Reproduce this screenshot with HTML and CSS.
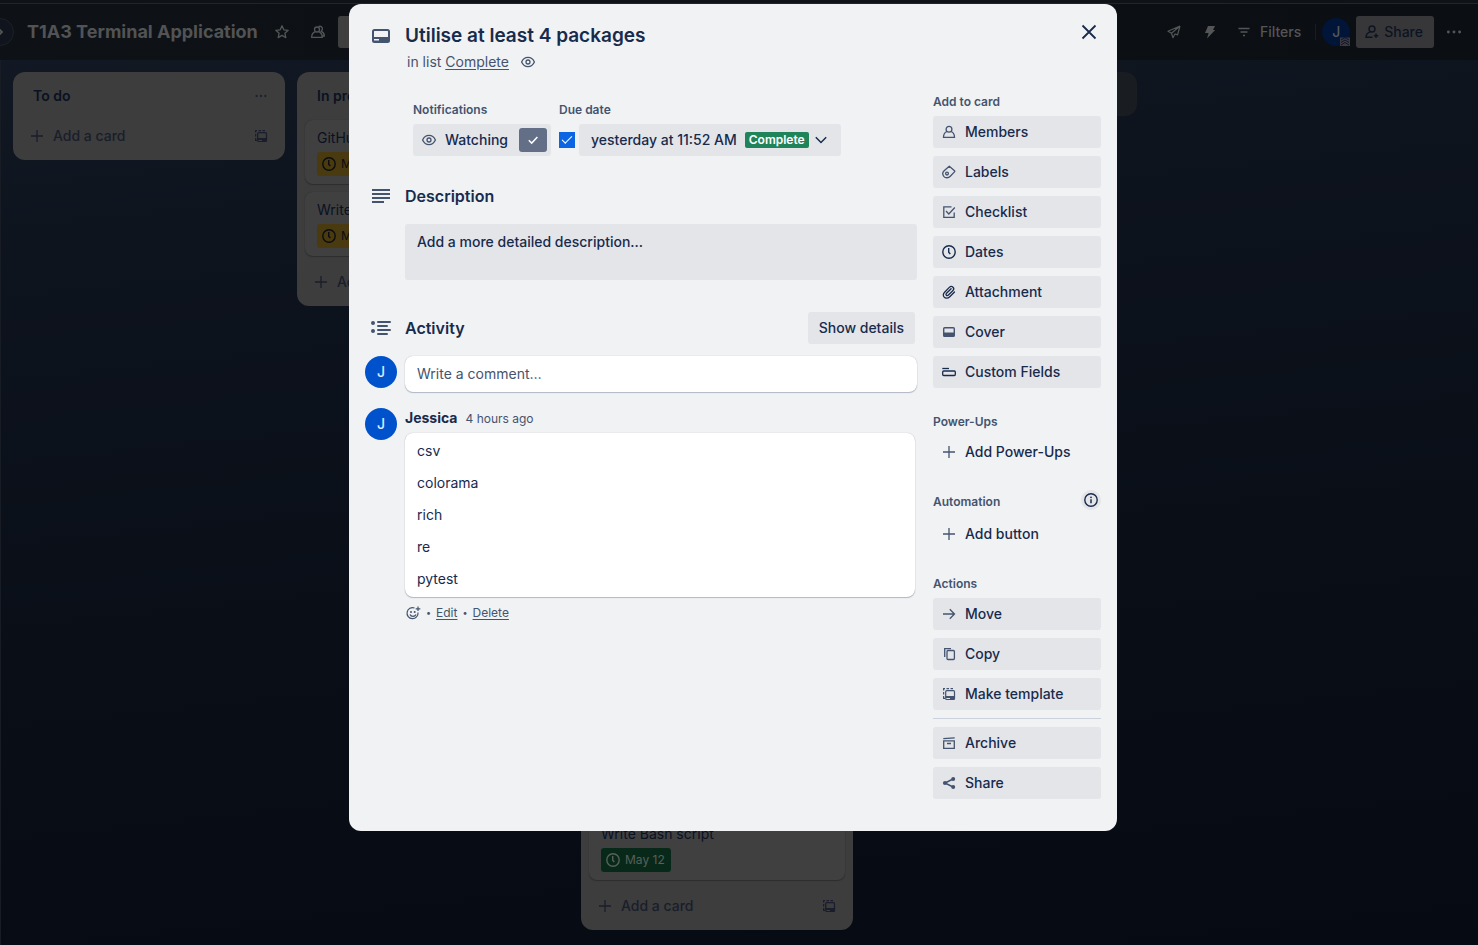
FILE: index.html
```html
<!DOCTYPE html>
<html lang="en">
<head>
<meta charset="utf-8">
<title>Utilise at least 4 packages</title>
<meta name="viewport" content="width=device-width, initial-scale=1">
<link rel="stylesheet" href="styles.css">
</head>
<body>
<svg class="sprite" aria-hidden="true">
  <symbol id="i-plus" viewBox="0 0 16 16"><path d="M8 2v12M2 8h12" fill="none" stroke="currentColor" stroke-width="1.3"/></symbol>
  <symbol id="i-template" viewBox="0 0 16 16"><g fill="none" stroke="currentColor" stroke-width="1.2"><path d="M2.600 4.500V2.600H4M5.500 2.600h2.500M9.500 2.600H12M2.600 6v2.500M2.600 10v2.400H4"/><rect x="4.700" y="4.700" width="8.800" height="8.800" rx="1"/></g><path d="M4.700 10h8.800v3.500H9V12H4.700z" fill="currentColor"/></symbol>
  <symbol id="i-dots" viewBox="0 0 16 16"><g fill="currentColor"><circle cx="3" cy="8" r="1.3"/><circle cx="8" cy="8" r="1.3"/><circle cx="13" cy="8" r="1.3"/></g></symbol>
  <symbol id="i-clock" viewBox="0 0 16 16"><g fill="none" stroke="currentColor" stroke-width="1.4"><circle cx="8" cy="8" r="6.2"/><path d="M7.7 4v4.2l1.6 1.8"/></g></symbol>
  <symbol id="i-eye" viewBox="0 0 16 16"><g fill="none" stroke="currentColor" stroke-width="1.3"><path d="M1.6 8C3 4.9 5.3 3.4 8 3.4S13 4.9 14.4 8C13 11.1 10.700 12.600 8 12.600S3 11.100 1.600 8z"/><circle cx="8" cy="8" r="2"/></g></symbol>
  <symbol id="i-check" viewBox="0 0 16 16"><path d="M3.800 8.200l2.900 2.900 5.700-6" fill="none" stroke="currentColor" stroke-width="1.500"/></symbol>
  <symbol id="i-card" viewBox="0 0 20 20"><rect x="2" y="4" width="16" height="12" rx="1.500" fill="none" stroke="currentColor" stroke-width="2"/><path d="M2 11h16v5H2z" fill="currentColor"/><path d="M3 13h5v1.500H3z" fill="#f1f2f4"/></symbol>
</svg>

<div class="board">
  <header class="board-bar">
    <button class="expand" aria-label="Expand sidebar"><svg viewBox="0 0 16 16" width="16" height="16"><path d="M6 4l4 4-4 4" fill="none" stroke="currentColor" stroke-width="1.800"/></svg></button>
    <h1 class="board-name">T1A3 Terminal Application</h1>
    <button class="bar-icon star" aria-label="Star board"><svg viewBox="0 0 16 16" width="16" height="16"><path d="M8 1.800l1.800 4 4.400.5-3.300 2.900.9 4.400L8 11.400l-3.800 2.200.9-4.400L1.800 6.300l4.400-.5z" fill="none" stroke="currentColor" stroke-width="1.300" stroke-linejoin="round"/></svg></button>
    <button class="bar-icon" aria-label="Visibility"><svg viewBox="0 0 16 16" width="16" height="16"><g fill="none" stroke="currentColor" stroke-width="1.300"><circle cx="7" cy="5.500" r="2.500"/><path d="M5.500 7.600C3 8.500 1.600 10.500 1.700 13.300h10.600c0-2.800-1.300-4.800-3.800-5.700M8.500 2.600c2-1 4 .2 3.900 2.200 0 1-.4 1.800-1.200 2.400 2 .9 3.100 2.500 3.100 4.800h-1.500"/></g></svg></button>
    <button class="view-button" aria-label="Board view"></button>
    <div class="bar-right">
      <button class="bar-icon" aria-label="Power-Ups"><svg viewBox="0 0 16 16" width="16" height="16"><path d="M14 2L2 7.300l3.500 2M14 2l-2.500 9L9 9.800M14 2L5.500 9.300 7 13.700 9 9.800" fill="none" stroke="currentColor" stroke-width="1.200" stroke-linejoin="round"/></svg></button>
      <button class="bar-icon" aria-label="Automation"><svg viewBox="0 0 16 16" width="16" height="16"><path d="M6 2h7l-2 4h2.200L5 14.500 6.600 9H3z" fill="currentColor"/></svg></button>
      <button class="filters"><svg viewBox="0 0 16 16" width="16" height="16"><path d="M2.500 4.500h11M4.500 8h7M7 11.500h2" fill="none" stroke="currentColor" stroke-width="1.400"/></svg>Filters</button>
      <span class="bar-divider"></span>
      <span class="member">J<svg viewBox="0 0 10 10" width="10" height="10"><path d="M0 1.500h10V10H0z" fill="#3a3a42"/><path d="M1 4l4-2.500L9 4M1 6.500L5 4l4 2.500M1 9l4-2.500L9 9" fill="none" stroke="#12122a" stroke-width="1"/></svg></span>
      <button class="share-board"><svg viewBox="0 0 16 16" width="16" height="16"><g fill="none" stroke="currentColor" stroke-width="1.400"><circle cx="8" cy="5" r="3"/><path d="M6.300 7.800C3.500 8.700 2 10.500 2 13.300h6.500M12 9.500v4.500M9.800 11.800h4.500"/></g></svg>Share</button>
      <button class="bar-icon more" aria-label="More"><svg width="18" height="18"><use href="#i-dots"/></svg></button>
    </div>
  </header>

  <main class="lists">
    <section class="list">
      <div class="list-head"><h2>To do</h2><button aria-label="List actions"><svg width="14" height="14"><use href="#i-dots"/></svg></button></div>
      <div class="list-foot"><button class="add-card"><svg width="16" height="16"><use href="#i-plus"/></svg>Add a card</button><button aria-label="Create from template"><svg width="16" height="16"><use href="#i-template"/></svg></button></div>
    </section>
    <section class="list">
      <div class="list-head"><h2>In progress</h2><button aria-label="List actions"><svg width="14" height="14"><use href="#i-dots"/></svg></button></div>
      <div class="cards">
        <article class="card"><p>GitHub</p><span class="due soon"><svg width="16" height="16"><use href="#i-clock"/></svg>May 14</span></article>
        <article class="card"><p>Write</p><span class="due soon"><svg width="16" height="16"><use href="#i-clock"/></svg>May 14</span></article>
      </div>
      <div class="list-foot"><button class="add-card"><svg width="16" height="16"><use href="#i-plus"/></svg>Add a card</button></div>
    </section>
    <section class="list list-full" aria-label="Complete">
      <div class="cards">
        <article class="card"><p>Write Bash script</p><span class="due done"><svg width="16" height="16"><use href="#i-clock"/></svg>May 12</span></article>
      </div>
      <div class="list-foot"><button class="add-card"><svg width="16" height="16"><use href="#i-plus"/></svg>Add a card</button><button aria-label="Create from template"><svg width="16" height="16"><use href="#i-template"/></svg></button></div>
    </section>
    <button class="add-list" aria-label="Add another list"></button>
  </main>
</div>

<div class="overlay">
  <div class="dialog" role="dialog" aria-labelledby="card-title">
    <button class="close" aria-label="Close"><svg viewBox="0 0 20 20" width="20" height="20"><path d="M3.500 3.500l13 13M16.500 3.500l-13 13" fill="none" stroke="currentColor" stroke-width="1.800"/></svg></button>
    <header class="dialog-head">
      <svg class="head-icon" width="20" height="20"><use href="#i-card"/></svg>
      <div>
        <h2 id="card-title">Utilise at least 4 packages</h2>
        <p class="in-list">in list <a href="#">Complete</a><svg width="16" height="16"><use href="#i-eye"/></svg></p>
      </div>
    </header>
    <div class="dialog-body">
      <div class="main">
        <div class="details">
          <div>
            <h3 class="label">Notifications</h3>
            <button class="gray-button watching"><svg width="16" height="16"><use href="#i-eye"/></svg>Watching<span class="watch-check"><svg width="16" height="16"><use href="#i-check"/></svg></span></button>
          </div>
          <div>
            <h3 class="label">Due date</h3>
            <div class="due-row">
              <input type="checkbox" class="due-box" aria-label="Due date complete" checked>
              <button class="gray-button due-button">yesterday at 11:52 AM<span class="badge">Complete</span><svg viewBox="0 0 16 16" width="16" height="16"><path d="M2.800 5.300L8 10.500l5.200-5.200" fill="none" stroke="currentColor" stroke-width="1.500"/></svg></button>
            </div>
          </div>
        </div>

        <div class="section-head">
          <svg class="head-icon" viewBox="0 0 22 22" width="22" height="22"><path d="M2 5h18M2 9h18M2 13h18M2 17h12" fill="none" stroke="currentColor" stroke-width="2"/></svg>
          <h3>Description</h3>
        </div>
        <button class="description">Add a more detailed description...</button>

        <div class="section-head activity">
          <svg class="head-icon" viewBox="0 0 22 22" width="22" height="22"><g fill="none" stroke="currentColor" stroke-width="2" stroke-linecap="round"><path d="M8 5h12M8 9h9M8 13h12M8 17h9"/></g><g fill="currentColor"><circle cx="3" cy="6" r="2"/><circle cx="3" cy="14" r="2"/></g></svg>
          <h3>Activity</h3>
          <button class="gray-button details-button">Show details</button>
        </div>
        <div class="row">
          <span class="avatar">J</span>
          <input class="comment-input" type="text" placeholder="Write a comment…" aria-label="Write a comment">
        </div>
        <div class="row comment">
          <span class="avatar">J</span>
          <div class="comment-main">
            <p class="byline"><strong>Jessica</strong><a href="#">4 hours ago</a></p>
            <div class="comment-text"><p>csv</p><p>colorama</p><p>rich</p><p>re</p><p>pytest</p></div>
            <div class="comment-links"><button aria-label="Add reaction"><svg viewBox="0 0 16 16" width="16" height="16"><g fill="none" stroke="currentColor" stroke-width="1.200"><path d="M9.500 3A5.500 5.500 0 1 0 13 7.500"/><path d="M5 9.600c1 2.400 5 2.400 6 0M13 1.500v4.600M10.700 3.800h4.600"/></g><circle cx="6" cy="7" r="1" fill="currentColor"/><circle cx="9.700" cy="7" r="1" fill="currentColor"/></svg></button><span class="dot">•</span><a href="#">Edit</a><span class="dot">•</span><a href="#">Delete</a></div>
          </div>
        </div>
      </div>

      <aside class="side">
        <section>
          <h3 class="label">Add to card</h3>
          <div class="stack">
            <button class="gray-button"><svg viewBox="0 0 16 16" width="16" height="16"><g fill="none" stroke="currentColor" stroke-width="1.300"><circle cx="8" cy="5.300" r="2.900"/><path d="M5.800 7.500C3.500 8.500 2.500 10.500 2.500 13.300h11c0-2.800-1-4.800-3.300-5.800"/></g></svg>Members</button>
            <button class="gray-button"><svg viewBox="0 0 16 16" width="16" height="16"><g fill="none" stroke="currentColor" stroke-width="1.300"><path d="M8.300 2.200l5.200 4.500c.4.400.4.800 0 1.200l-4.200 4.300c-2 2.200-5 1.900-6.500.1-1.500-1.900-1.200-4.300.6-5.900z" stroke-linejoin="round"/><circle cx="6" cy="9.600" r="1.400"/></g></svg>Labels</button>
            <button class="gray-button"><svg viewBox="0 0 16 16" width="16" height="16"><path d="M10.500 2.900H2.800v10.400h10.400V8.500M5 7l2.800 3 6-6.500" fill="none" stroke="currentColor" stroke-width="1.300"/></svg>Checklist</button>
            <button class="gray-button strong"><svg width="16" height="16"><use href="#i-clock"/></svg>Dates</button>
            <button class="gray-button strong"><svg viewBox="0 0 16 16" width="16" height="16"><path d="M13.500 8l-4.700 4.700c-2.300 2.300-4.600 1.500-5.600.4C2 11.900 1.900 10 3.600 8.300l4.700-4.900c1.300-1.300 2.900-1 3.700-.2.900.9 1 2.300-.2 3.500L7.400 11c-.8.800-1.700.6-2.100.2-.5-.5-.5-1.200.2-1.900l4.600-4.600" fill="none" stroke="currentColor" stroke-width="1.300" stroke-linecap="round"/></svg>Attachment</button>
            <button class="gray-button"><svg viewBox="0 0 16 16" width="16" height="16"><rect x="2.700" y="3.700" width="10.600" height="8.600" rx="1" fill="none" stroke="currentColor" stroke-width="1.400"/><path d="M2.500 8.500h11v4h-11z" fill="currentColor"/></svg>Cover</button>
            <button class="gray-button strong"><svg viewBox="0 0 16 16" width="16" height="16"><g fill="none" stroke="currentColor" stroke-width="1.300"><path d="M1.300 4.500H8"/><rect x="1.700" y="7" width="12.600" height="4.500" rx="1"/></g></svg>Custom Fields</button>
          </div>
        </section>
        <section>
          <h3 class="label">Power-Ups</h3>
          <div class="stack"><button class="gray-button plain"><svg width="16" height="16"><use href="#i-plus"/></svg>Add Power-Ups</button></div>
        </section>
        <section>
          <div class="label automation"><h3>Automation</h3><button aria-label="About automation"><svg viewBox="0 0 16 16" width="16" height="16"><circle cx="8" cy="8" r="6.200" fill="none" stroke="currentColor" stroke-width="1.400"/><path d="M8 7.200v4" stroke="currentColor" stroke-width="1.500"/><circle cx="8" cy="5.300" r=".9" fill="currentColor"/></svg></button></div>
          <div class="stack"><button class="gray-button plain"><svg width="16" height="16"><use href="#i-plus"/></svg>Add button</button></div>
        </section>
        <section>
          <h3 class="label">Actions</h3>
          <div class="stack">
            <button class="gray-button"><svg viewBox="0 0 16 16" width="16" height="16"><path d="M2 8h11.500M8.800 3.300L13.500 8l-4.700 4.700" fill="none" stroke="currentColor" stroke-width="1.300"/></svg>Move</button>
            <button class="gray-button"><svg viewBox="0 0 16 16" width="16" height="16"><g fill="none" stroke="currentColor" stroke-width="1.300"><rect x="6" y="4.500" width="7.400" height="9" rx="1"/><path d="M3.700 11V2.700H10"/></g></svg>Copy</button>
            <button class="gray-button"><svg width="16" height="16"><use href="#i-template"/></svg>Make template</button>
            <hr>
            <button class="gray-button"><svg viewBox="0 0 16 16" width="16" height="16"><g fill="none" stroke="currentColor" stroke-width="1.300"><path d="M2.300 3.700l11.400-.9M2.700 5.800h10.600v7.500H2.700zM6 8.500h4"/></g></svg>Archive</button>
            <button class="gray-button"><svg viewBox="0 0 16 16" width="16" height="16"><path d="M12 4L4 8l8 4" fill="none" stroke="currentColor" stroke-width="1.500"/><g fill="currentColor"><circle cx="12.200" cy="4" r="2"/><circle cx="4" cy="8" r="2.100"/><circle cx="12.200" cy="12" r="2"/></g></svg>Share</button>
          </div>
        </section>
      </aside>
    </div>
  </div>
</div>
</body>
</html>
```
FILE: styles.css
```css
*, *::before, *::after { box-sizing: border-box; }

body {
  margin: 0;
  font-family: Inter, "Liberation Sans", sans-serif;
  font-size: 14px;
  line-height: 20px;
  color: #172b4d;
  background: #060a13;
}

h1, h2, h3, p { margin: 0; }

button, input { font: inherit; color: inherit; }

button {
  margin: 0;
  padding: 0;
  border: 0;
  background: none;
}

svg { display: block; flex: none; }
.sprite { position: absolute; width: 0; height: 0; }

/* Board behind the dialog */
.board {
  display: flex;
  flex-direction: column;
  height: 100vh;
  overflow: hidden;
  border-top: 3px solid #0f1318;
  background: linear-gradient(174deg, #131a25 0%, #0e141e 22%, #090e17 60%, #060a13 100%);
}

.board-bar {
  display: flex;
  align-items: center;
  flex: none;
  height: 57px;
  border-top: 1px solid #22262b;
  background: linear-gradient(90deg, #0e1217, #0b0e13);
  color: #545556;
}

.expand {
  display: flex;
  align-items: center;
  justify-content: center;
  width: 28px;
  height: 28px;
  margin-left: -14px;
  border: 1px solid #1d2029;
  border-radius: 50%;
  background: #10141d;
}

.board-name {
  margin-left: 13px;
  font-size: 18px;
  line-height: 24px;
  font-weight: 700;
  color: #525354;
}

.bar-icon {
  display: flex;
  align-items: center;
  justify-content: center;
  width: 36px;
  height: 32px;
}

.star { margin-left: 6px; }

.view-button {
  width: 88px;
  height: 32px;
  margin-left: 2px;
  border-radius: 3px;
  background: #403f40;
}

.bar-right {
  display: flex;
  align-items: center;
  margin-left: auto;
  padding-right: 6px;
}

.filters {
  display: flex;
  align-items: center;
  gap: 8px;
  padding: 0 14px 0 8px;
  font-weight: 500;
}

.bar-divider { width: 1px; height: 16px; background: #191d22; }

.member {
  position: relative;
  display: flex;
  align-items: center;
  justify-content: center;
  width: 28px;
  height: 28px;
  margin: 0 6px;
  border-radius: 50%;
  background: #001537;
  color: #55585f;
  font-weight: 500;
}

.member svg { position: absolute; right: 0; bottom: 0; }

.share-board {
  display: flex;
  align-items: center;
  gap: 4px;
  height: 32px;
  padding: 0 11px 0 8px;
  border-radius: 3px;
  background: #373739;
  color: #0c1422;
  font-weight: 500;
}

.more { margin-left: 2px; }

.lists {
  display: flex;
  align-items: flex-start;
  flex: 1;
  gap: 12px;
  min-height: 0;
  padding: 12px 12px 15px;
  border-left: 1px solid #171c25;
}

.list {
  flex: none;
  width: 272px;
  padding-bottom: 8px;
  border-radius: 12px;
  background: #3c3d3c;
  color: #0a1122;
}

.list-full {
  display: flex;
  flex-direction: column;
  align-self: stretch;
}

.list-full .cards { flex: 1; justify-content: flex-end; }

.list-head {
  display: flex;
  align-items: center;
  justify-content: space-between;
  height: 48px;
  padding: 0 17px 0 20px;
}

.list-head h2 { font-size: 14px; font-weight: 600; line-height: 20px; }
.list-head button { color: #1d2230; }

.list-foot {
  display: flex;
  align-items: center;
  justify-content: space-between;
  height: 32px;
  padding: 0 16px;
  color: #1a1d2b;
}

.add-card { display: flex; align-items: center; gap: 8px; font-weight: 500; }

.cards {
  display: flex;
  flex-direction: column;
  gap: 8px;
  padding: 0 8px 10px;
}

.card {
  padding: 8px 12px;
  border-radius: 8px;
  background: #404040;
  box-shadow: 0 1px 1px #2d2e2e, 0 0 1px #2d2e2e;
}

.due {
  display: inline-flex;
  align-items: center;
  gap: 4px;
  height: 24px;
  margin-top: 4px;
  padding: 0 6px 0 4px;
  border-radius: 3px;
  font-size: 12px;
  vertical-align: top;
}

.soon { background: #4a3a10; color: #0b0d10; }
.done { background: #08291a; color: #57605a; }

.add-list {
  flex: none;
  width: 272px;
  height: 44px;
  border-radius: 12px;
  background: #191c21;
}

/* Card dialog */
.overlay {
  position: absolute;
  inset: 0;
  padding: 4px 12px 0 0;
  overflow: hidden;
}

.dialog {
  position: relative;
  width: 100%;
  max-width: 768px;
  margin: 0 auto;
  padding: 16px 16px 32px;
  border-radius: 12px;
  background: #f1f2f4;
}

.close {
  position: absolute;
  top: 8px;
  right: 8px;
  display: flex;
  align-items: center;
  justify-content: center;
  width: 40px;
  height: 40px;
}

.dialog-head {
  display: grid;
  grid-template-columns: 32px 1fr;
  column-gap: 8px;
  color: #44546f;
}

.head-icon { justify-self: center; color: #44546f; }
.dialog-head .head-icon { margin-top: 6px; }

.dialog-head h2 {
  margin-top: 4px;
  font-size: 19px;
  line-height: 24px;
  font-weight: 600;
  color: #172b4d;
}

.in-list {
  display: flex;
  align-items: center;
  margin-top: 4px;
  padding-left: 2px;
  white-space: pre;
}

.in-list svg { margin-left: 11px; }
a { color: #44546f; text-decoration: underline; text-underline-offset: 2px; }

.dialog-body {
  display: grid;
  grid-template-columns: minmax(0, 1fr) 168px;
  gap: 16px;
  margin-top: 20px;
}

.label {
  margin-bottom: 4px;
  font-size: 12px;
  line-height: 20px;
  font-weight: 600;
  color: #44546f;
}

.gray-button {
  display: flex;
  align-items: center;
  gap: 8px;
  height: 32px;
  padding: 0 12px 0 8px;
  border-radius: 3px;
  background: #e4e5e9;
  font-weight: 500;
  white-space: nowrap;
}

.gray-button > svg { color: #44546f; }
.strong > svg, .due-button > svg { color: #172b4d; }
.plain { background: none; }

.details { display: flex; gap: 8px; padding: 8px 0 0 48px; }

.watching { padding-right: 4px; }

.watch-check {
  display: flex;
  align-items: center;
  justify-content: center;
  width: 28px;
  height: 24px;
  margin-left: 3px;
  border-radius: 3px;
  background: #626f86;
  color: #fff;
}

.due-row { display: flex; align-items: center; gap: 4px; }

.due-box {
  appearance: none;
  display: grid;
  place-items: center;
  width: 16px;
  height: 16px;
  margin: 0;
  background: #0c66e4;
}

.due-box:checked::before {
  content: "";
  width: 10px;
  height: 5px;
  margin-bottom: 3px;
  border: solid #fff;
  border-width: 0 0 1px 1px;
  transform: rotate(-45deg);
}

.due-button { padding-left: 12px; }
.due-button > svg { margin-left: -4px; }

.badge {
  padding: 0 4px;
  border-radius: 2px;
  background: #1f845a;
  color: #fff;
  font-size: 12px;
  line-height: 16px;
  font-weight: 600;
}

.section-head {
  display: grid;
  grid-template-columns: 32px 1fr auto;
  column-gap: 8px;
  align-items: center;
  min-height: 32px;
  margin: 24px 0 12px;
}

.section-head h3 { font-size: 16px; line-height: 24px; font-weight: 600; }

.description {
  display: flex;
  width: calc(100% - 40px);
  min-height: 56px;
  margin-left: 40px;
  padding: 8px 12px;
  border-radius: 3px;
  background: #e4e5e9;
  font-weight: 500;
}

.activity { margin-top: 32px; }
.details-button { padding: 0 11px; margin-right: 2px; }

.row { display: flex; gap: 8px; }

.avatar {
  display: flex;
  align-items: center;
  justify-content: center;
  flex: none;
  width: 32px;
  height: 32px;
  border-radius: 50%;
  background: #0052cc;
  color: #deebff;
  font-weight: 500;
}

.comment-input, .comment-text {
  border: 0;
  border-radius: 8px;
  background: #fff;
  box-shadow: 0 1px 1px #091e4240, 0 0 1px #091e424f;
}

.comment-input {
  flex: 1;
  min-width: 0;
  height: 36px;
  padding: 0 12px 2px;
}

.comment-input::placeholder { color: #44546f; opacity: 1; }

.comment { margin-top: 16px; }
.comment-main { flex: 1; margin-right: 2px; }

.byline { display: flex; align-items: baseline; gap: 8px; margin-bottom: 4px; }
.byline strong { font-weight: 700; }
.byline a { font-size: 12px; text-decoration: none; }

.comment-text { padding: 8px 12px; }
.comment-text p + p { margin-top: 12px; }

.comment-links {
  display: flex;
  align-items: center;
  gap: 5px;
  margin-top: 6px;
  font-size: 12px;
  color: #44546f;
}

.dot { font-size: 9px; }

.side section + section { margin-top: 24px; }

.automation {
  display: flex;
  align-items: center;
  justify-content: space-between;
  height: 20px;
  margin-bottom: 6px;
}

.automation h3 { font-size: 12px; font-weight: 600; }

.automation button {
  display: flex;
  align-items: center;
  justify-content: center;
  width: 20px;
  height: 20px;
  margin-bottom: 4px;
  border-radius: 50%;
  background: #e4e5e9;
  color: #172b4d;
}

.stack { display: flex; flex-direction: column; gap: 8px; }

.stack hr {
  width: 100%;
  height: 1px;
  margin: 0;
  border: 0;
  background: #ccd2dc;
}
```
